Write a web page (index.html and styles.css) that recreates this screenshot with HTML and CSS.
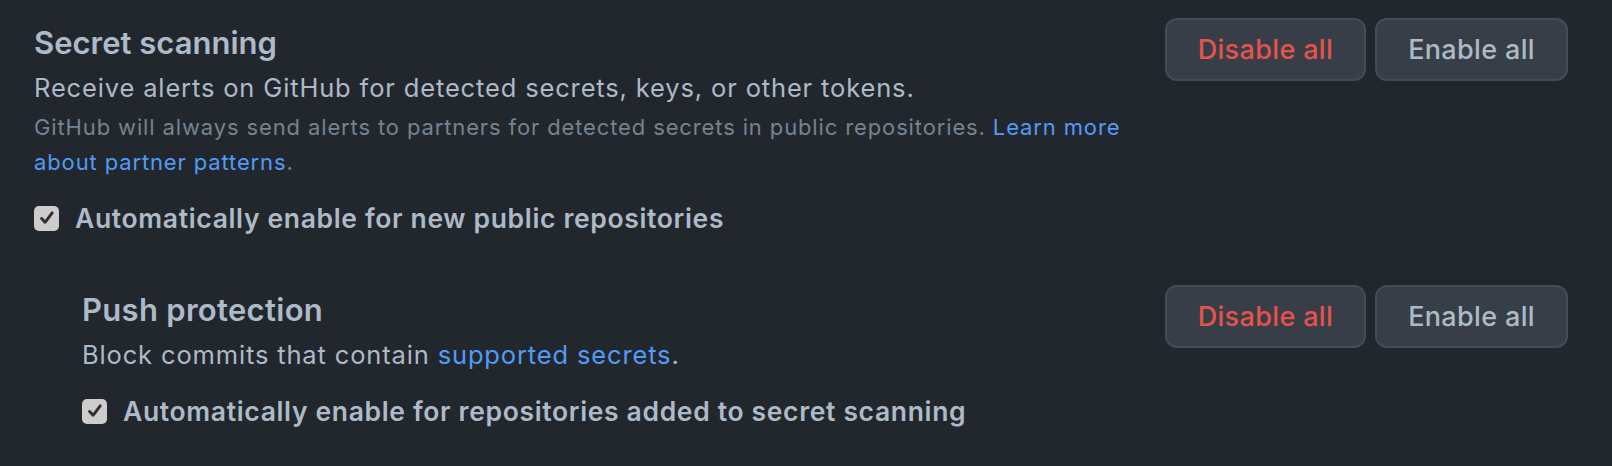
FILE: index.html
```html
<!DOCTYPE html>
<html lang="en">
<head>
<meta charset="utf-8">
<title>Secret scanning</title>
<link rel="stylesheet" href="styles.css">
</head>
<body>
<div class="page">
  <div class="row">
    <div class="info">
      <h3 class="title">Secret scanning</h3>
      <p class="desc">Receive alerts on GitHub for detected secrets, keys, or other tokens.</p>
      <p class="note">GitHub will always send alerts to partners for detected secrets in public repositories. <a href="#" class="link">Learn more about partner patterns</a>.</p>
      <label class="check">
        <span class="box"><svg viewBox="0 0 16 16" width="18" height="18"><path d="M3.2 8.4 L6.3 11.8 L12.6 3.4" fill="none" stroke="#2f2f2f" stroke-width="2.6" stroke-linecap="round" stroke-linejoin="round"/></svg></span>
        <span class="check-label">Automatically enable for new public repositories</span>
      </label>
    </div>
    <div class="actions">
      <button class="btn btn-danger">Disable all</button>
      <button class="btn">Enable all</button>
    </div>
  </div>
  <div class="row row-sub">
    <div class="info">
      <h3 class="title title-sub">Push protection</h3>
      <p class="desc desc-sub">Block commits that contain <a href="#" class="link">supported secrets</a>.</p>
      <label class="check check-sub">
        <span class="box"><svg viewBox="0 0 16 16" width="18" height="18"><path d="M3.2 8.4 L6.3 11.8 L12.6 3.4" fill="none" stroke="#2f2f2f" stroke-width="2.6" stroke-linecap="round" stroke-linejoin="round"/></svg></span>
        <span class="check-label">Automatically enable for repositories added to secret scanning</span>
      </label>
    </div>
    <div class="actions">
      <button class="btn btn-danger">Disable all</button>
      <button class="btn">Enable all</button>
    </div>
  </div>
</div>
</body>
</html>
```
FILE: styles.css
```css
html, body {
  margin: 0;
  padding: 0;
  background: #22272e;
}
body {
  font-family: Inter, "Noto Sans", "Liberation Sans", sans-serif;
  color: #adbac7;
  width: 1612px;
  height: 466px;
  overflow: hidden;
}
.page {
  padding: 18px 44px 0 34px;
}
.row {
  display: flex;
  align-items: flex-start;
  justify-content: space-between;
  gap: 30px;
}
.row-sub {
  margin-top: 51px;
  padding-left: 48px;
}
.info {
  flex: 1;
  padding-top: 5px;
  max-width: 1100px;
}
.title {
  margin: 0;
  font-size: 31px;
  line-height: 40px;
  font-weight: 600;
  color: #adbac7;
}
.title-sub {
  letter-spacing: 0.3px;
}
.desc {
  margin: 6px 0 0;
  font-size: 25.5px;
  letter-spacing: 0.85px;
  line-height: 38px;
}
.desc-sub {
  margin-top: 6px;
}
.note {
  margin: 3px 0 0;
  font-size: 22px;
  letter-spacing: 0.87px;
  line-height: 35px;
  color: #768390;
}
.link {
  color: #539bf5;
  text-decoration: none;
}
.check {
  display: flex;
  align-items: center;
  gap: 16px;
  margin-top: 22px;
}
.check-sub {
  margin-top: 21px;
}
.box {
  width: 25px;
  height: 25px;
  border-radius: 5px;
  background: #cdcdcd;
  display: flex;
  align-items: center;
  justify-content: center;
  flex: none;
}
.check-label {
  font-size: 26.5px;
  letter-spacing: 0.65px;
  line-height: 32px;
  font-weight: 600;
}
.actions {
  display: flex;
  gap: 9px;
  flex: none;
}
.btn {
  font-family: inherit;
  font-size: 27px;
  letter-spacing: 0.35px;
  font-weight: 500;
  height: 63px;
  padding: 0 31px;
  border-radius: 12px;
  border: 2px solid #444c56;
  background: #373e47;
  color: #adbac7;
}
.btn-danger {
  color: #e5534b;
}
```
